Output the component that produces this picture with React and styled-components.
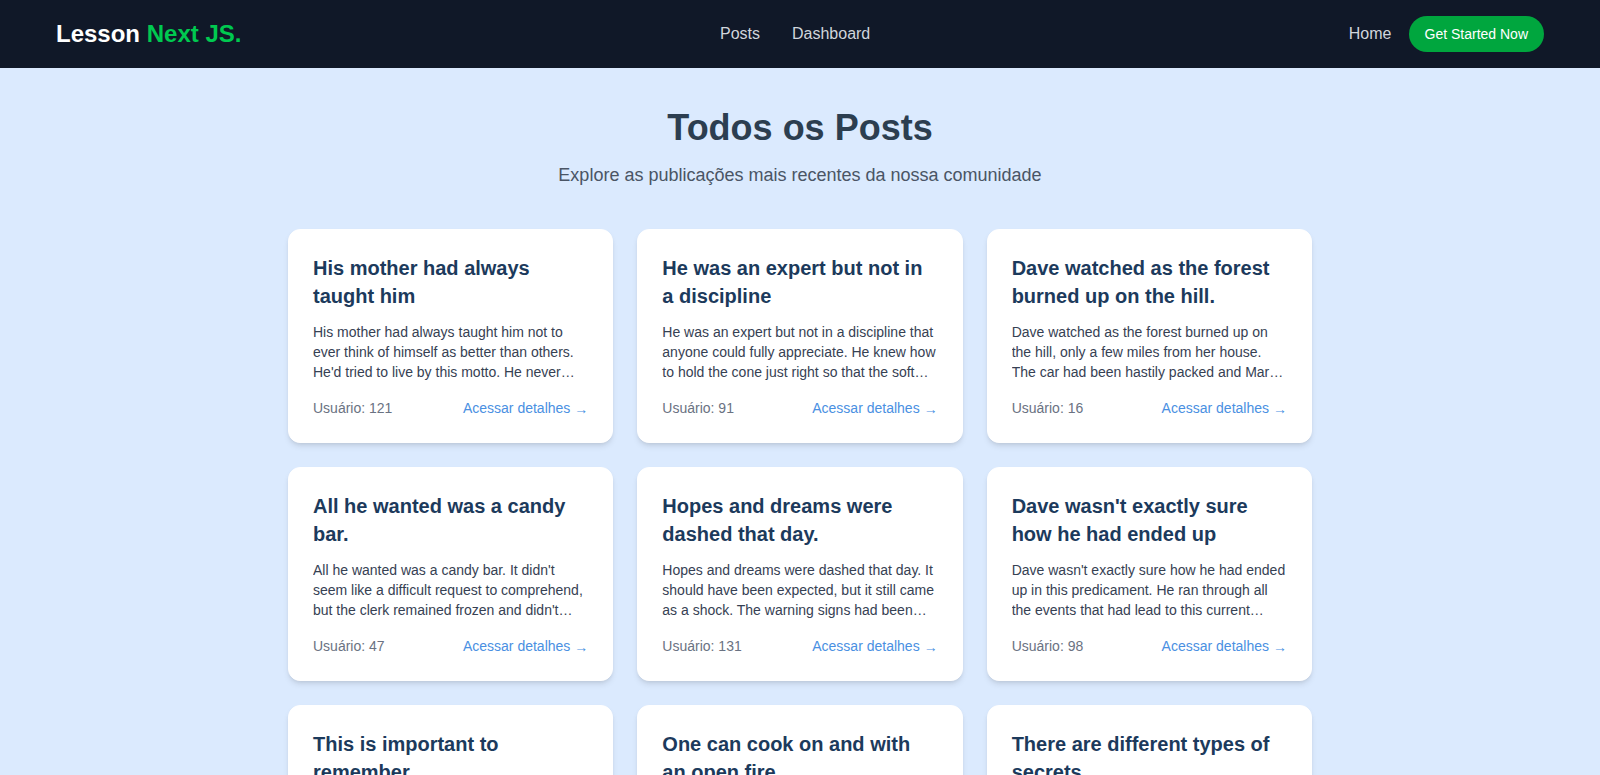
import React from "react";
import styled, { createGlobalStyle } from "styled-components";

const Global = createGlobalStyle`
  * { box-sizing: border-box; }
  body {
    margin: 0;
    font-family: "Liberation Sans", Arial, sans-serif;
    background: #dbeafe;
  }
`;

const Header = styled.header`
  display: flex;
  align-items: center;
  justify-content: space-between;
  height: 68px;
  padding: 0 56px;
  background: #101828;
`;

const Logo = styled.div`
  font-size: 24px;
  font-weight: 700;
  color: #ffffff;
  span { color: #00c950; }
`;

const Nav = styled.nav`
  display: flex;
  gap: 32px;
`;

const NavLink = styled.a`
  font-size: 16px;
  color: #d1d5dc;
  text-decoration: none;
`;

const Right = styled.div`
  display: flex;
  align-items: center;
  gap: 17px;
`;

const CTA = styled.button`
  border: none;
  border-radius: 999px;
  background: #00a63e;
  color: #ffffff;
  font-family: inherit;
  font-size: 14px;
  line-height: 20px;
  padding: 8px 16px;
  cursor: pointer;
`;

const Main = styled.main`
  max-width: 1024px;
  margin: 0 auto;
  padding: 40px 0;
`;

const Title = styled.h1`
  margin: 0 0 13px;
  text-align: center;
  font-size: 36px;
  line-height: 40px;
  font-weight: 700;
  color: #2c3e50;
`;

const Sub = styled.p`
  margin: 0 0 40px;
  text-align: center;
  font-size: 18px;
  line-height: 28px;
  color: #4a5565;
`;

const Grid = styled.div`
  display: grid;
  grid-template-columns: repeat(3, 1fr);
  gap: 24px;
`;

const Card = styled.article`
  background: #ffffff;
  border: 1px solid #ffffff;
  border-radius: 12px;
  padding: 24px;
  box-shadow: 0 4px 6px -1px rgba(0, 0, 0, 0.1), 0 2px 4px -2px rgba(0, 0, 0, 0.1);
`;

const CardTitle = styled.h2`
  margin: 0 0 12px;
  font-size: 20px;
  line-height: 28px;
  font-weight: 700;
  color: #1c3a5c;
`;

const Body = styled.p`
  margin: 0;
  font-size: 14px;
  line-height: 20px;
  color: #364153;
  display: -webkit-box;
  -webkit-box-orient: vertical;
  -webkit-line-clamp: 3;
  overflow: hidden;
`;

const Foot = styled.div`
  display: flex;
  justify-content: space-between;
  align-items: center;
  margin-top: 16px;
  font-size: 14px;
  line-height: 20px;
`;

const User = styled.span`
  color: #6a7282;
`;

const More = styled.a`
  color: #4a90e2;
  text-decoration: none;
  span { margin-left: 4px; position: relative; top: 1px; }
`;

const posts = [
  { t: "His mother had always taught him", u: 121, b: "His mother had always taught him not to ever think of himself as better than others. He'd tried to live by this motto. He never looked down on those who were less fortunate or who had less money than him." },
  { t: "He was an expert but not in a discipline", u: 91, b: "He was an expert but not in a discipline that anyone could fully appreciate. He knew how to hold the cone just right so that the soft serve ice cream fell into it at the precise angle to form a perfect cone each and every time." },
  { t: "Dave watched as the forest burned up on the hill.", u: 16, b: "Dave watched as the forest burned up on the hill, only a few miles from her house. The car had been hastily packed and Marta was inside trying to round up the last of the pets." },
  { t: "All he wanted was a candy bar.", u: 47, b: "All he wanted was a candy bar. It didn't seem like a difficult request to comprehend, but the clerk remained frozen and didn't seem willing to honor the request." },
  { t: "Hopes and dreams were dashed that day.", u: 131, b: "Hopes and dreams were dashed that day. It should have been expected, but it still came as a shock. The warning signs had been ignored in favor of the possibility, however remote, that it could actually happen." },
  { t: "Dave wasn't exactly sure how he had ended up", u: 98, b: "Dave wasn't exactly sure how he had ended up in this predicament. He ran through all the events that had lead to this current situation and it still didn't make sense." },
  { t: "This is important to remember.", u: 70, b: "This is important to remember. Love isn't like pie. You don't need to divide it among all your friends and loved ones. No matter how much love you give, you can always give more." },
  { t: "One can cook on and with an open fire.", u: 67, b: "One can cook on and with an open fire. These are some of the ways to cook with fire outside. Cooking meat using a spit is a great way to evenly cook meat." },
  { t: "There are different types of secrets.", u: 82, b: "There are different types of secrets. She had held onto plenty of them during her life, but this one was different. She found herself holding onto the worst type." },
];

export default function App() {
  return (
    <>
      <Global />
      <Header>
        <Logo>Lesson <span>Next JS.</span></Logo>
        <Nav>
          <NavLink href="#">Posts</NavLink>
          <NavLink href="#">Dashboard</NavLink>
        </Nav>
        <Right>
          <NavLink href="#">Home</NavLink>
          <CTA>Get Started Now</CTA>
        </Right>
      </Header>
      <Main>
        <Title>Todos os Posts</Title>
        <Sub>Explore as publicações mais recentes da nossa comunidade</Sub>
        <Grid>
          {posts.map((p, i) => (
            <Card key={i}>
              <CardTitle>{p.t}</CardTitle>
              <Body>{p.b}</Body>
              <Foot>
                <User>Usuário: {p.u}</User>
                <More href="#">Acessar detalhes<span>→</span></More>
              </Foot>
            </Card>
          ))}
        </Grid>
      </Main>
    </>
  );
}
